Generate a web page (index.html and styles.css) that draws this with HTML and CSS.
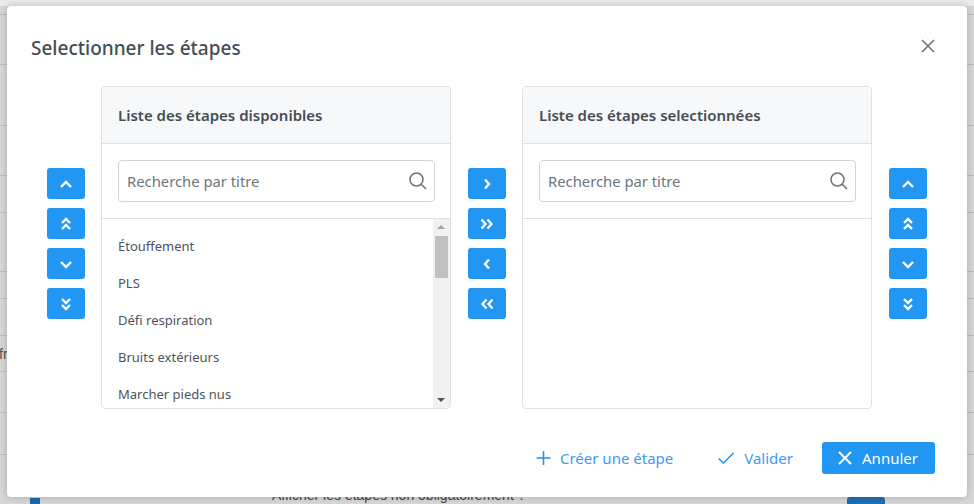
FILE: index.html
```html
<!DOCTYPE html>
<html lang="fr">
<head>
<meta charset="utf-8">
<title>Selectionner les étapes</title>
<link rel="stylesheet" href="styles.css">
</head>
<body>
<div class="page">
  <div class="bg-row h15"></div>
  <div class="bg-row h50"></div>
  <div class="bg-row h61"></div>
  <div class="bg-row h50"></div>
  <div class="bg-row h37"></div>
  <div class="bg-row h59"></div>
  <div class="bg-row h27"></div>
  <div class="bg-row h37"></div>
  <div class="bg-row h36"><span class="bg-text">fr</span></div>
  <div class="bg-row h41"></div>
  <div class="bg-row h42"></div>
  <div class="bg-row last">
    <span class="bg-check"></span>
    <span class="bg-label">Afficher les étapes non obligatoirement ?</span>
    <span class="bg-btn"></span>
  </div>
</div>

<div class="modal">
  <div class="modal-header">
    <h2 class="modal-title">Selectionner les étapes</h2>
    <button class="close-btn" aria-label="Fermer">
      <svg width="14" height="14" viewBox="0 0 14 14"><path d="M1 1 L13 13 M13 1 L1 13" stroke="#6c757d" stroke-width="1.6" fill="none"/></svg>
    </button>
  </div>

  <div class="modal-body">
    <div class="btn-col">
      <button class="arrow-btn"><svg width="14" height="14" viewBox="0 0 14 14"><path d="M2 10 L7 5 L12 10" class="chev"/></svg></button>
      <button class="arrow-btn"><svg width="14" height="16" viewBox="0 0 14 16"><path d="M3 7 L7 3 L11 7 M3 13 L7 9 L11 13" class="chev"/></svg></button>
      <button class="arrow-btn"><svg width="14" height="14" viewBox="0 0 14 14"><path d="M2 5 L7 10 L12 5" class="chev"/></svg></button>
      <button class="arrow-btn"><svg width="14" height="16" viewBox="0 0 14 16"><path d="M3 3 L7 7 L11 3 M3 9 L7 13 L11 9" class="chev"/></svg></button>
    </div>

    <div class="panel">
      <div class="panel-header">Liste des étapes disponibles</div>
      <div class="panel-search">
        <div class="search-box">
          <span class="search-placeholder">Recherche par titre</span>
          <svg class="search-icon" width="20" height="20" viewBox="0 0 20 20"><circle cx="8.5" cy="8.5" r="6.5" stroke="#6c757d" stroke-width="1.5" fill="none"/><path d="M13.2 13.2 L18 18" stroke="#6c757d" stroke-width="1.6"/></svg>
        </div>
      </div>
      <div class="panel-list">
        <ul class="items">
          <li>Étouffement</li>
          <li>PLS</li>
          <li>Défi respiration</li>
          <li>Bruits extérieurs</li>
          <li>Marcher pieds nus</li>
        </ul>
        <div class="scrollbar">
          <div class="sb-arrow up"></div>
          <div class="sb-thumb"></div>
          <div class="sb-track"></div>
          <div class="sb-arrow down"></div>
        </div>
      </div>
    </div>

    <div class="btn-col">
      <button class="arrow-btn"><svg width="14" height="14" viewBox="0 0 14 14"><path d="M5 2.5 L9 7 L5 11.5" class="chev"/></svg></button>
      <button class="arrow-btn"><svg width="16" height="14" viewBox="0 0 16 14"><path d="M2.5 2.5 L6.5 7 L2.5 11.5 M8.5 2.5 L12.5 7 L8.5 11.5" class="chev"/></svg></button>
      <button class="arrow-btn"><svg width="14" height="14" viewBox="0 0 14 14"><path d="M9 2.5 L5 7 L9 11.5" class="chev"/></svg></button>
      <button class="arrow-btn"><svg width="16" height="14" viewBox="0 0 16 14"><path d="M7.5 2.5 L3.5 7 L7.5 11.5 M13.5 2.5 L9.5 7 L13.5 11.5" class="chev"/></svg></button>
    </div>

    <div class="panel">
      <div class="panel-header">Liste des étapes selectionnées</div>
      <div class="panel-search">
        <div class="search-box">
          <span class="search-placeholder">Recherche par titre</span>
          <svg class="search-icon" width="20" height="20" viewBox="0 0 20 20"><circle cx="8.5" cy="8.5" r="6.5" stroke="#6c757d" stroke-width="1.5" fill="none"/><path d="M13.2 13.2 L18 18" stroke="#6c757d" stroke-width="1.6"/></svg>
        </div>
      </div>
      <div class="panel-list empty"></div>
    </div>

    <div class="btn-col">
      <button class="arrow-btn"><svg width="14" height="14" viewBox="0 0 14 14"><path d="M2 10 L7 5 L12 10" class="chev"/></svg></button>
      <button class="arrow-btn"><svg width="14" height="16" viewBox="0 0 14 16"><path d="M3 7 L7 3 L11 7 M3 13 L7 9 L11 13" class="chev"/></svg></button>
      <button class="arrow-btn"><svg width="14" height="14" viewBox="0 0 14 14"><path d="M2 5 L7 10 L12 5" class="chev"/></svg></button>
      <button class="arrow-btn"><svg width="14" height="16" viewBox="0 0 14 16"><path d="M3 3 L7 7 L11 3 M3 9 L7 13 L11 9" class="chev"/></svg></button>
    </div>
  </div>

  <div class="modal-footer">
    <button class="link-btn">
      <svg width="15" height="16" viewBox="0 0 15 16"><path d="M7.5 1 V15 M0.5 8 H14.5" stroke="#2196f3" stroke-width="1.6"/></svg>
      <span>Créer une étape</span>
    </button>
    <button class="link-btn">
      <svg width="18" height="16" viewBox="0 0 18 16"><path d="M1.5 8.5 L6.5 13 L16.5 3" stroke="#2196f3" stroke-width="1.6" fill="none"/></svg>
      <span>Valider</span>
    </button>
    <button class="primary-btn">
      <svg width="16" height="16" viewBox="0 0 16 16"><path d="M2 2 L14 14 M14 2 L2 14" stroke="#fff" stroke-width="2" fill="none"/></svg>
      <span>Annuler</span>
    </button>
  </div>
</div>
</body>
</html>
```

FILE: styles.css
```css
* { box-sizing: border-box; }

html, body {
  margin: 0;
  padding: 0;
  width: 974px;
  height: 504px;
  overflow: hidden;
}

body {
  background: #d9d9d9;
  font-family: "Noto Sans", "Open Sans", sans-serif;
  color: #495057;
  position: relative;
}

/* ---------- dimmed page behind ---------- */
.page {
  display: flex;
  flex-direction: column;
  height: 504px;
  background: linear-gradient(#ececec, #ececec 6px, #d8d8d8 6px);
}
.bg-row {
  border-bottom: 1px solid #bdbdbd;
  position: relative;
  flex: none;
  display: flex;
  align-items: center;
}
.h15 { height: 15px; }
.h50 { height: 50px; }
.h61 { height: 61px; }
.h37 { height: 37px; }
.h59 { height: 59px; }
.h27 { height: 27px; }
.h36 { height: 36px; }
.h41 { height: 41px; }
.h42 { height: 42px; }
.bg-row.last { border-bottom: none; flex: 1; align-items: flex-end; }
.bg-text {
  font-family: "Liberation Sans", sans-serif;
  font-size: 14px;
  color: #555;
  margin-left: -1px;
}
.bg-check {
  width: 10px; height: 10px;
  background: #1f66b0;
  margin: 0 0 -4px 30px;
}
.bg-label {
  font-family: "Liberation Sans", sans-serif;
  font-size: 14px;
  color: #444;
  line-height: 16px;
  margin: 0 0 1px 232px;
}
.bg-btn {
  width: 38px; height: 7px;
  background: #1d6fb8;
  margin-left: auto;
  margin-right: 89px;
  border-radius: 3px 3px 0 0;
}

/* ---------- modal ---------- */
.modal {
  position: absolute;
  left: 7px;
  top: 6px;
  width: 960px;
  height: 491px;
  background: #fff;
  border-radius: 4px;
  box-shadow: 0 0 8px rgba(0, 0, 0, 0.22);
  display: flex;
  flex-direction: column;
}

.modal-header {
  display: flex;
  align-items: center;
  justify-content: space-between;
  padding: 26px 32px 0 24px;
  height: 58px;
}
.modal-title {
  margin: 0;
  font-size: 19px;
  font-weight: 500;
  color: #454c54;
  line-height: 24px;
}
.close-btn {
  background: none;
  border: none;
  padding: 0;
  width: 14px;
  height: 14px;
  display: flex;
  margin-top: -5px;
}

.modal-body {
  display: flex;
  align-items: flex-start;
  padding: 22px 0 0 40px;
  gap: 16px;
}

.btn-col {
  display: flex;
  flex-direction: column;
  gap: 9px;
  padding-top: 82px;
}
.panel + .btn-col { margin-left: 1px; }

.arrow-btn {
  width: 38px;
  height: 31px;
  border: none;
  border-radius: 3px;
  background: #2196f3;
  display: flex;
  align-items: center;
  justify-content: center;
  padding: 0;
}
.chev {
  stroke: #fff;
  stroke-width: 2.4;
  fill: none;
}

.panel {
  width: 350px;
  height: 323px;
  border: 1px solid #dee2e6;
  border-radius: 4px;
  display: flex;
  flex-direction: column;
  overflow: hidden;
}
.panel-header {
  height: 57px;
  flex: none;
  background: #f7f8fa;
  border-bottom: 1px solid #dee2e6;
  padding: 0 16px 1px;
  display: flex;
  align-items: center;
  font-size: 15px;
  font-weight: 600;
  color: #464d55;
}
.panel-search {
  height: 75px;
  flex: none;
  padding: 16px 15px 0 16px;
  border-bottom: 1px solid #dee2e6;
}
.search-box {
  height: 42px;
  border: 1px solid #ced4da;
  border-radius: 4px;
  display: flex;
  align-items: center;
  justify-content: space-between;
  padding: 0 6px 0 8px;
}
.search-placeholder {
  font-size: 14.8px;
  color: #6c757d;
}

.panel-list {
  flex: 1;
  display: flex;
  min-height: 0;
}
.items {
  list-style: none;
  margin: 0;
  padding: 8px 0 0 16px;
  flex: 1;
  overflow: hidden;
}
.items li {
  height: 37px;
  display: flex;
  align-items: center;
  font-size: 13px;
  color: #4d545b;
}

.scrollbar {
  width: 17px;
  flex: none;
  background: #f1f1f1;
  display: flex;
  flex-direction: column;
  align-items: center;
}
.sb-arrow {
  height: 17px;
  width: 17px;
  flex: none;
  position: relative;
}
.sb-arrow::after {
  content: "";
  position: absolute;
  left: 4px;
  border-left: 4px solid transparent;
  border-right: 4px solid transparent;
}
.sb-arrow.up::after {
  top: 6px;
  border-bottom: 4px solid #a3a3a3;
}
.sb-arrow.down::after {
  top: 7px;
  border-top: 4px solid #505050;
}
.sb-thumb {
  width: 13px;
  height: 42px;
  flex: none;
  background: #c1c1c1;
}
.sb-track { flex: 1; }

/* ---------- footer ---------- */
.modal-footer {
  margin-top: auto;
  display: flex;
  justify-content: flex-end;
  align-items: center;
  padding: 0 32px 23px 0;
}
.link-btn {
  background: none;
  border: none;
  display: flex;
  align-items: center;
  gap: 9px;
  font-family: inherit;
  font-size: 15px;
  color: #3d9bf0;
  padding: 0;
}
.link-btn + .link-btn { margin-left: 44px; }
.link-btn + .primary-btn { margin-left: 29px; }
.primary-btn {
  width: 113px;
  height: 32px;
  border: none;
  border-radius: 3px;
  background: #2196f3;
  color: #fff;
  font-family: inherit;
  font-size: 15px;
  display: flex;
  align-items: center;
  justify-content: center;
  gap: 9px;
  padding: 0 2px 0 0;
}
```
